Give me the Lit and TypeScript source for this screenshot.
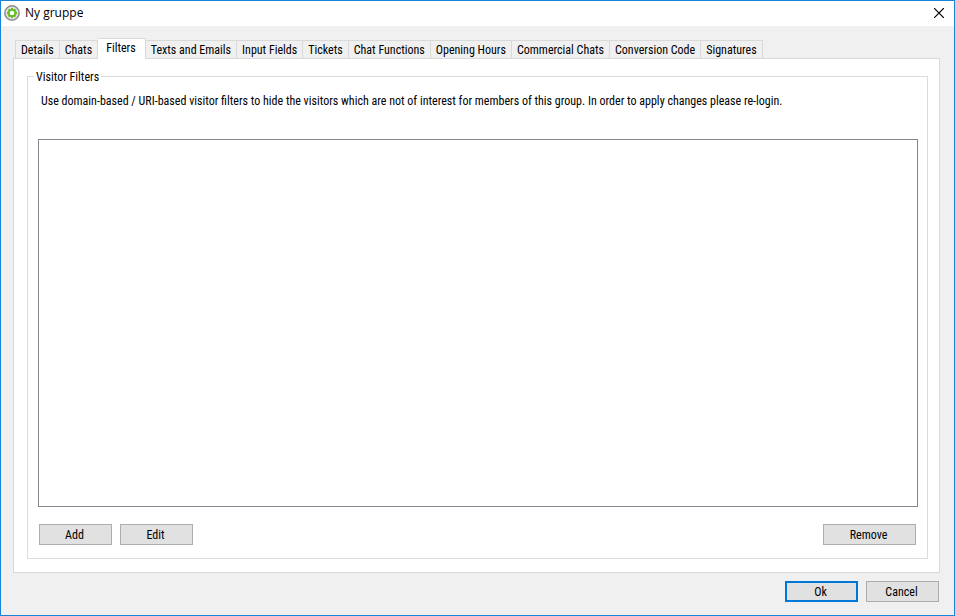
import { LitElement, html, css } from "lit";
import { customElement, state } from "lit/decorators.js";
import { classMap } from "lit/directives/class-map.js";

const TABS = [
  "Details",
  "Chats",
  "Filters",
  "Texts and Emails",
  "Input Fields",
  "Tickets",
  "Chat Functions",
  "Opening Hours",
  "Commercial Chats",
  "Conversion Code",
  "Signatures",
];

@customElement("app-root")
export class AppRoot extends LitElement {
  static styles = css`
    :host {
      display: flex;
      flex-direction: column;
      box-sizing: border-box;
      min-height: 100vh;
      border: 1px solid #1883d7;
      background: #f0f0f0;
      color: #000;
      font: 12px/14px "Roboto Condensed", Roboto, "Liberation Sans", sans-serif;
    }
    * {
      box-sizing: border-box;
    }
    .titlebar {
      display: flex;
      align-items: center;
      height: 25px;
      padding: 0 8px 1px 3px;
      background: #fff;
    }
    .logo {
      width: 16px;
      height: 16px;
      margin-right: 5px;
    }
    .title {
      flex: 1;
      margin: 0;
      font: 12px/16px "Open Sans", "Noto Sans", sans-serif;
    }
    .close {
      display: flex;
      padding: 2px;
      border: 0;
      background: none;
    }
    .close svg {
      width: 10px;
      height: 10px;
    }
    .tabs {
      display: flex;
      align-items: flex-end;
      padding: 12px 14px 0;
    }
    .tab {
      height: 18px;
      padding: 1px 5px 0;
      border: 1px solid #d9d9d9;
      border-width: 1px 1px 0 0;
      background: #f0f0f0;
      color: inherit;
      font: inherit;
      white-space: nowrap;
    }
    .tab:first-child {
      border-left-width: 1px;
    }
    .tab.active {
      position: relative;
      height: 21px;
      margin-bottom: -1px;
      padding: 0 9px 2px 8px;
      background: #fff;
    }
    .panel {
      flex: 1;
      display: flex;
      margin: 0 14px 0 12px;
      padding: 10px 11px 13px 13px;
      border: 1px solid #d9d9d9;
      background: #fff;
    }
    .group {
      flex: 1;
      display: flex;
      flex-direction: column;
      min-width: 0;
      margin: 0;
      padding: 10px 9px 13px 10px;
      border: 1px solid #dcdcdc;
    }
    .legend {
      margin-left: -4px;
      padding: 1px 2px 0;
    }
    .hint {
      margin: 0 0 31px 3px;
    }
    .list {
      flex: 1;
      width: 100%;
      min-height: 120px;
      border: 1px solid #828790;
      border-radius: 0;
      background: #fff;
      font: inherit;
    }
    .actions {
      display: flex;
      gap: 8px;
      padding: 17px 2px 0 1px;
    }
    .footer {
      display: flex;
      justify-content: flex-end;
      gap: 8px;
      padding: 8px 15px 13px;
    }
    .button {
      width: 73px;
      height: 21px;
      padding: 1px 2px 0 0;
      border: 1px solid #adadad;
      background: #e1e1e1;
      color: inherit;
      font: inherit;
    }
    .button.wide {
      width: 93px;
      margin-left: auto;
    }
    .button.default {
      border: 2px solid #0078d7;
    }
  `;

  @state() private active = "Filters";

  render() {
    return html`
      <header class="titlebar">
        <svg class="logo" viewBox="0 0 16 16" aria-hidden="true">
          <circle cx="8" cy="8" r="7.2" fill="#dedede" stroke="#8f8f8f" stroke-width="1.5" />
          <path d="M8 3v10M3 8h10M4.5 4.5l7 7M11.5 4.5l-7 7" stroke="#62bd19" stroke-width="1.8" />
          <circle cx="8" cy="8" r="3.2" fill="#fff" stroke="#62bd19" stroke-width="1.7" />
        </svg>
        <h1 class="title">Ny gruppe</h1>
        <button class="close" aria-label="Close">
          <svg viewBox="0 0 10 10"><path d="M0 0l10 10M10 0l-10 10" stroke="#000" stroke-width="1.2" /></svg>
        </button>
      </header>
      <nav class="tabs" role="tablist">
        ${TABS.map(
          (name) => html`<button
            class=${classMap({ tab: true, active: name === this.active })}
            role="tab"
            aria-selected=${name === this.active ? "true" : "false"}
            @click=${() => (this.active = name)}
          >${name}</button>`
        )}
      </nav>
      <main class="panel" role="tabpanel">
        <fieldset class="group">
          <legend class="legend">Visitor Filters</legend>
          <p class="hint" id="hint">Use domain-based / URI-based visitor filters to hide the visitors which are not of interest for members of this group. In order to apply changes please re-login.</p>
          <select class="list" size="10" aria-label="Visitor Filters" aria-describedby="hint"></select>
          <div class="actions">
            <button class="button">Add</button>
            <button class="button">Edit</button>
            <button class="button wide">Remove</button>
          </div>
        </fieldset>
      </main>
      <footer class="footer">
        <button class="button default">Ok</button>
        <button class="button">Cancel</button>
      </footer>
    `;
  }
}
